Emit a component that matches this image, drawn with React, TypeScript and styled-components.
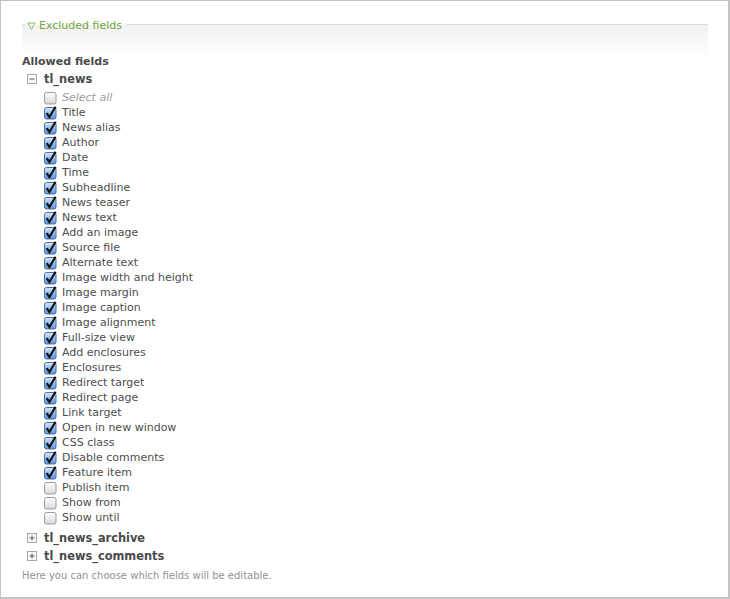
import React from 'react';
import styled, { createGlobalStyle } from 'styled-components';

const Global = createGlobalStyle`
  html, body { margin: 0; padding: 0; background: #fff; }
  body { font-family: "DejaVu Sans", Verdana, sans-serif; }
`;

const Frame = styled.div`
  width: 730px;
  height: 599px;
  box-sizing: border-box;
  border: 1px solid #c4c4c4;
  border-right-width: 2px;
  border-bottom-width: 2px;
  background: #fff;
`;

const Fieldset = styled.fieldset`
  margin: 14px 20px 0 21px;
  padding: 0;
  border: 0;
  border-top: 1px solid #dcdcdc;
  min-width: 0;
  background: linear-gradient(#f1f1f1, #fff 32px);
`;

const Legend = styled.legend`
  margin-left: 3px;
  padding: 4px 4px 0 2px;
  display: flex;
  align-items: center;
  gap: 3px;
  font-size: 11px;
  line-height: 14px;
  color: #6ea83c;
`;

const Content = styled.div`
  padding-top: 21px;
  display: flex;
  flex-direction: column;
`;

const Heading = styled.div`
  font-size: 11px;
  font-weight: bold;
  line-height: 16px;
  color: #4a4a4a;
`;

const Node = styled.div`
  display: flex;
  flex-direction: column;
`;

const NodeRow = styled.div`
  height: 18px;
  display: flex;
  align-items: center;
  gap: 7px;
  padding-left: 5px;
  font-size: 11.4px;
  font-weight: bold;
  color: #4a4a4a;
`;

const Items = styled.div`
  display: flex;
  flex-direction: column;
  padding: 2px 0 4px 22px;
`;

const Item = styled.label`
  height: 15px;
  display: flex;
  align-items: center;
  gap: 5px;
  font-size: 11px;
  color: #4d4d4d;
`;

const ItemText = styled.span<{ $muted?: boolean }>`
  font-style: ${p => (p.$muted ? 'italic' : 'normal')};
  color: ${p => (p.$muted ? '#9a9a9a' : '#4d4d4d')};
`;

const Help = styled.div`
  margin-top: 4px;
  font-size: 10px;
  line-height: 13px;
  color: #939393;
`;

const Triangle = () => (
  <svg width="9" height="8" viewBox="0 0 9 8">
    <path d="M0.8 1 H8.2 L4.5 7.2 Z" fill="none" stroke="#8cb86a" strokeWidth="1" strokeLinejoin="round" />
  </svg>
);

const Toggle = ({ open }: { open: boolean }) => (
  <svg width="10" height="10" viewBox="0 0 10 10">
    <rect x="0.5" y="0.5" width="9" height="9" fill="#fafafa" stroke="#a8a8a8" />
    <path d="M2.5 5 H7.5" stroke="#555" strokeWidth="1" />
    {!open && <path d="M5 2.5 V7.5" stroke="#555" strokeWidth="1" />}
  </svg>
);

const Check = ({ checked }: { checked: boolean }) => (
  <svg width="13" height="14" viewBox="0 0 13 14">
    <defs>
      <linearGradient id="cbOn" x1="0" y1="0" x2="0" y2="1">
        <stop offset="0" stopColor="#dbe9fb" />
        <stop offset="0.5" stopColor="#93bdf0" />
        <stop offset="1" stopColor="#5593e2" />
      </linearGradient>
      <linearGradient id="cbOff" x1="0" y1="0" x2="0" y2="1">
        <stop offset="0" stopColor="#fdfdfd" />
        <stop offset="0.5" stopColor="#ececec" />
        <stop offset="1" stopColor="#d6d6d6" />
      </linearGradient>
    </defs>
    <rect
      x="0.5"
      y="1.5"
      width="11.5"
      height="11.5"
      rx="2"
      fill={checked ? 'url(#cbOn)' : 'url(#cbOff)'}
      stroke={checked ? '#4b6e9f' : '#9d9d9d'}
    />
    {checked && (
      <path d="M2.6 7.2 L5.4 11 L11.6 0.8" fill="none" stroke="#141414" strokeWidth="2.2" strokeLinejoin="miter" />
    )}
  </svg>
);

const fields: [string, boolean][] = [
  ['Title', true],
  ['News alias', true],
  ['Author', true],
  ['Date', true],
  ['Time', true],
  ['Subheadline', true],
  ['News teaser', true],
  ['News text', true],
  ['Add an image', true],
  ['Source file', true],
  ['Alternate text', true],
  ['Image width and height', true],
  ['Image margin', true],
  ['Image caption', true],
  ['Image alignment', true],
  ['Full-size view', true],
  ['Add enclosures', true],
  ['Enclosures', true],
  ['Redirect target', true],
  ['Redirect page', true],
  ['Link target', true],
  ['Open in new window', true],
  ['CSS class', true],
  ['Disable comments', true],
  ['Feature item', true],
  ['Publish item', false],
  ['Show from', false],
  ['Show until', false],
];

export default function App() {
  return (
    <>
      <Global />
      <Frame>
        <Fieldset>
          <Legend>
            <Triangle />
            Excluded fields
          </Legend>
          <Content>
            <Heading>Allowed fields</Heading>
            <Node>
              <NodeRow>
                <Toggle open />
                tl_news
              </NodeRow>
              <Items>
                <Item>
                  <Check checked={false} />
                  <ItemText $muted>Select all</ItemText>
                </Item>
                {fields.map(([label, on]) => (
                  <Item key={label}>
                    <Check checked={on} />
                    <ItemText>{label}</ItemText>
                  </Item>
                ))}
              </Items>
            </Node>
            <Node>
              <NodeRow>
                <Toggle open={false} />
                tl_news_archive
              </NodeRow>
            </Node>
            <Node>
              <NodeRow>
                <Toggle open={false} />
                tl_news_comments
              </NodeRow>
            </Node>
            <Help>Here you can choose which fields will be editable.</Help>
          </Content>
        </Fieldset>
      </Frame>
    </>
  );
}
